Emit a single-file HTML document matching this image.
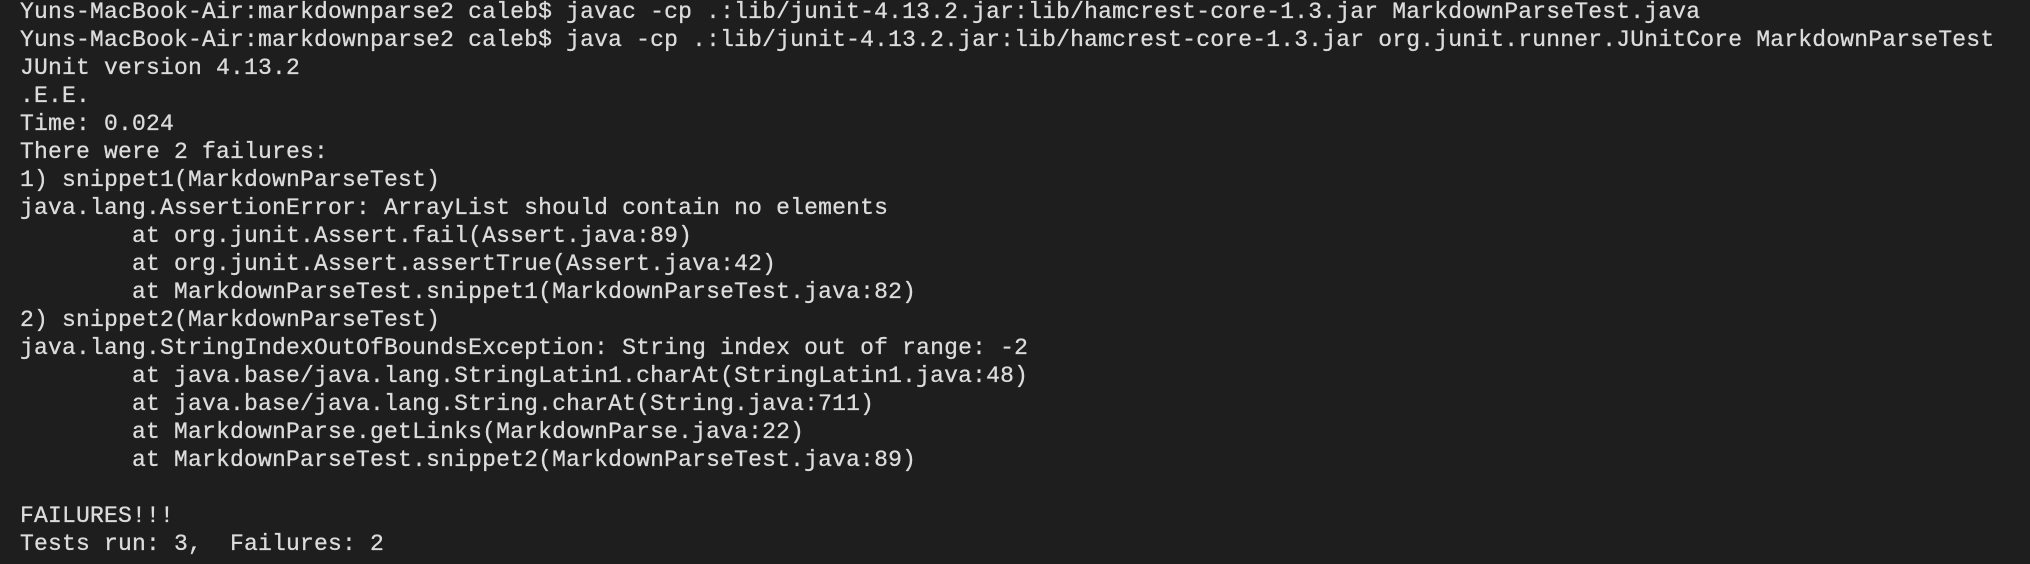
<!DOCTYPE html>
<html><head><meta charset="utf-8"><style>
html,body{margin:0;padding:0;background:#1e1e1e;width:2030px;height:564px;overflow:hidden}
pre{margin:0;position:absolute;left:20px;top:-2px;font-family:"Liberation Mono","DejaVu Sans Mono",monospace;font-size:23px;letter-spacing:0.2px;line-height:28px;color:#dcdcdc;-webkit-text-stroke:0.3px #dcdcdc}
</style></head><body><pre>Yuns-MacBook-Air:markdownparse2 caleb$ javac -cp .:lib/junit-4.13.2.jar:lib/hamcrest-core-1.3.jar MarkdownParseTest.java
Yuns-MacBook-Air:markdownparse2 caleb$ java -cp .:lib/junit-4.13.2.jar:lib/hamcrest-core-1.3.jar org.junit.runner.JUnitCore MarkdownParseTest
JUnit version 4.13.2
.E.E.
Time: 0.024
There were 2 failures:
1) snippet1(MarkdownParseTest)
java.lang.AssertionError: ArrayList should contain no elements
        at org.junit.Assert.fail(Assert.java:89)
        at org.junit.Assert.assertTrue(Assert.java:42)
        at MarkdownParseTest.snippet1(MarkdownParseTest.java:82)
2) snippet2(MarkdownParseTest)
java.lang.StringIndexOutOfBoundsException: String index out of range: -2
        at java.base/java.lang.StringLatin1.charAt(StringLatin1.java:48)
        at java.base/java.lang.String.charAt(String.java:711)
        at MarkdownParse.getLinks(MarkdownParse.java:22)
        at MarkdownParseTest.snippet2(MarkdownParseTest.java:89)

FAILURES!!!
Tests run: 3,  Failures: 2</pre></body></html>
